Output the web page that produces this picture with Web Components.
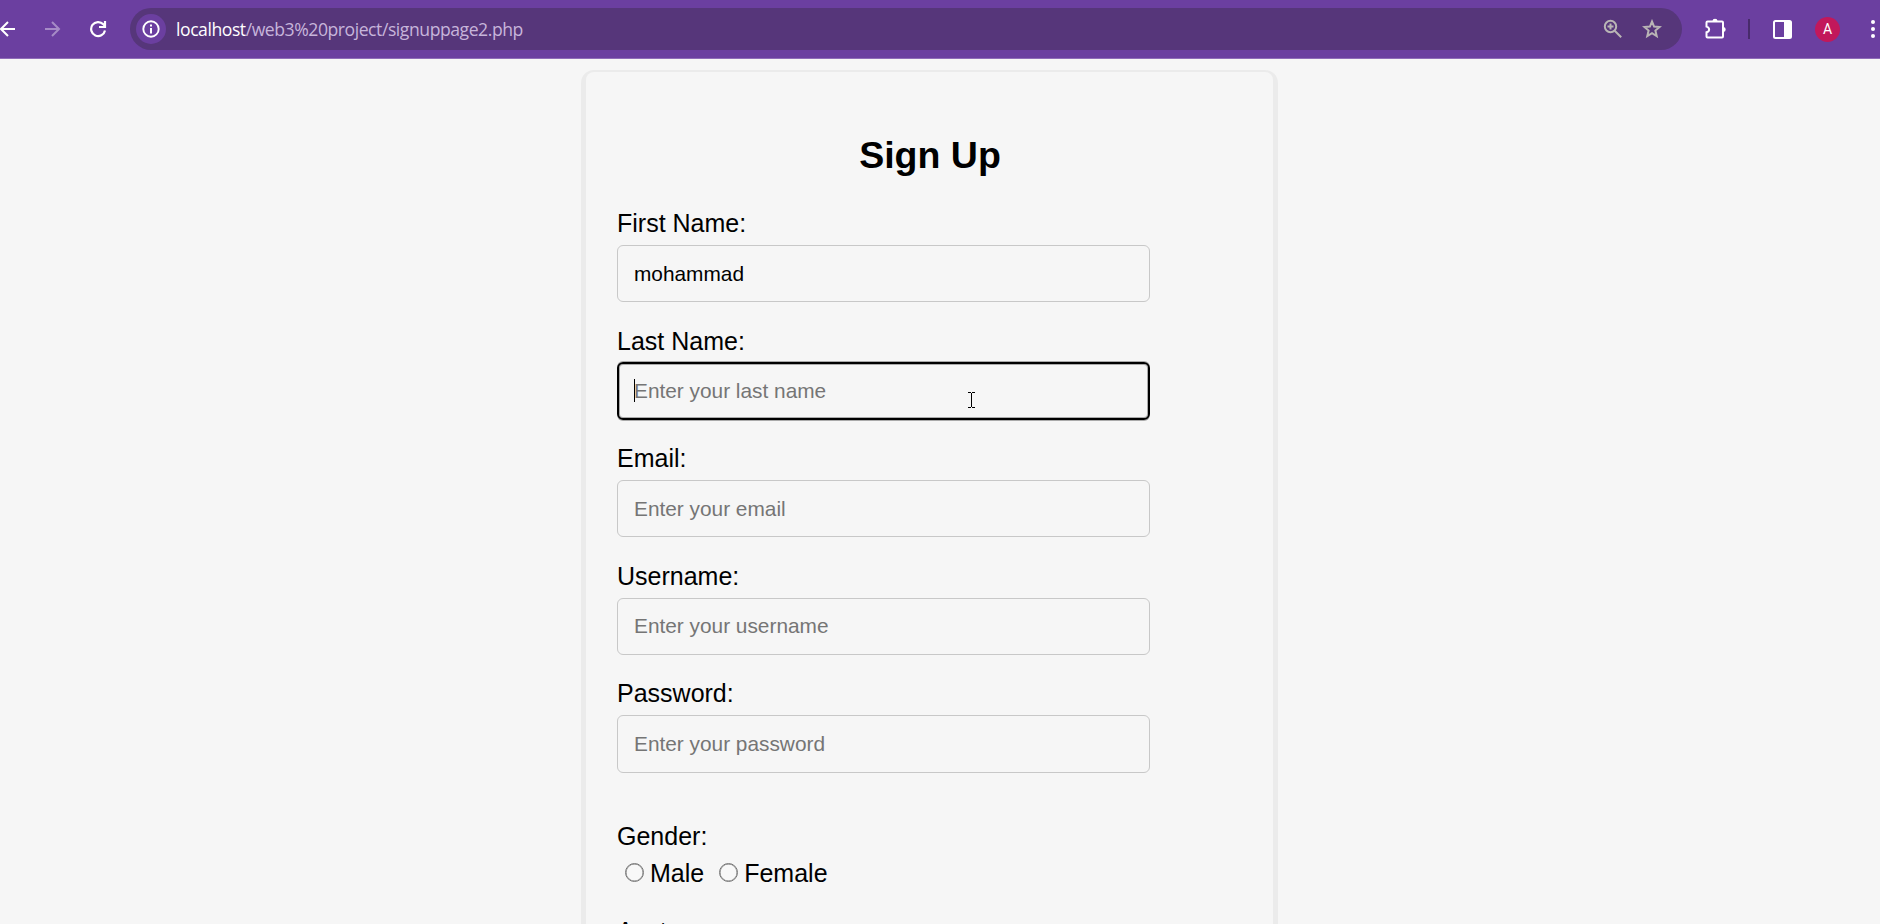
<!DOCTYPE html>
<html lang="en">
<head>
<meta charset="utf-8">
<title>Sign Up</title>
<style>
html,body{margin:0;height:100%;overflow:hidden;background:#f6f6f6;font-family:"Liberation Sans",Arial,sans-serif;color:#000}
</style>
</head>
<body>
<sign-up-app></sign-up-app>
<script>
const define = (name, html) => customElements.define(name, class extends HTMLElement {
  constructor(){ super(); this.attachShadow({mode:'open'}).innerHTML = html; }
});

define('browser-bar', `
<style>
:host{display:flex;align-items:center;box-sizing:border-box;width:1880px;height:59px;background:#6b3fa0;border-bottom:1px solid #8f6cb8;overflow:hidden;flex:none}
svg{display:block;flex:none}
.nav{display:flex;width:130px;height:58px;align-items:center;flex:none}
.back{margin-left:-1px}.fwd{margin-left:28px}.reload{margin-left:26px}
.omni{display:flex;align-items:center;box-sizing:border-box;width:1552px;height:42px;border-radius:21px;background:#56367a;padding:0 20px 0 6px;flex:none}
.info{display:flex;align-items:center;justify-content:center;width:30px;height:30px;border-radius:50%;background:#6b3fa0;flex:none}
.url{flex:1;margin-left:10px;font:17.6px/24px "Open Sans","Noto Sans",sans-serif;letter-spacing:-.45px;color:#c7b5da;white-space:pre}
.url b{font-weight:400;color:#fff}
.star{margin-left:19px}
.puzzle{margin-left:22px}
.sep{width:2px;height:20px;background:#482b6b;margin-left:21px;flex:none}
.side{margin-left:23px}
.avatar{width:25px;height:25px;border-radius:50%;background:#c2185b;color:#fff;font:14px/25px Roboto,sans-serif;text-align:center;margin-left:23px;flex:none}
.dots{margin-left:30px}
</style>
<div class="nav">
<svg class="back" width="18" height="18" viewBox="0 0 18 18" fill="none" stroke="#fff" stroke-width="2"><path d="M16 9H2.5M9 2 2 9l7 7"/></svg>
<svg class="fwd" width="18" height="18" viewBox="0 0 18 18" fill="none" stroke="#a68bc6" stroke-width="2"><path d="M0 9h13.5M7 2l7 7-7 7"/></svg>
<svg class="reload" width="18" height="18" viewBox="0 0 18 18" fill="none" stroke="#fff" stroke-width="2.2"><path d="M16 10.500A7 7 0 1 1 14.300 4.300L16 6M16 1v6h-6"/></svg>
</div>
<div class="omni">
<div class="info"><svg width="18" height="18" viewBox="0 0 18 18"><circle cx="9" cy="9" r="7.7" fill="none" stroke="#fff" stroke-width="1.9"/><path d="M8 4.5h2v2H8zM8 8h2v5.5H8z" fill="#fff"/></svg></div>
<div class="url"><b>localhost</b>/web3%20project/signuppage2.php</div>
<svg width="20" height="20" viewBox="0 0 20 20" fill="none" stroke="#b9b5b5" stroke-width="2"><circle cx="7.5" cy="7.5" r="5.7"/><path d="m11.7 11.7 6.500 6.500M7.500 4.500v6M4.500 7.500h6"/></svg>
<svg class="star" width="20" height="20" viewBox="0 0 20 20" fill="none" stroke="#b9b5b5" stroke-width="2"><path d="m10 2.500 2.100 5.100 5.500.4-4.200 3.600 1.300 5.400-4.700-2.900L5.300 17l1.300-5.400L2.400 8l5.500-.4z"/></svg>
</div>
<svg class="puzzle" width="23" height="22" viewBox="0 0 23 22"><path d="M3.500 3.500H18a1 1 0 0 1 1 1V18.500a1 1 0 0 1-1 1H3.500a1 1 0 0 1-1-1v-4.200c3.500-1 3.500-4.700 0-5.700V4.500a1 1 0 0 1 1-1z" fill="none" stroke="#fff" stroke-width="2"/><path d="M8.500 3a2.500 2.200 0 0 1 5 0zM19.500 9a2.200 2.500 0 0 1 0 5z" fill="#fff"/></svg>
<div class="sep"></div>
<svg class="side" width="19" height="19" viewBox="0 0 19 19"><rect x="1" y="1" width="17" height="17" rx="1.500" fill="none" stroke="#fff" stroke-width="2"/><path d="M11 1h7v17h-7z" fill="#fff"/></svg>
<div class="avatar">A</div>
<svg class="dots" width="6" height="20" viewBox="0 0 6 20" fill="#fff"><circle cx="3" cy="3" r="2"/><circle cx="3" cy="10" r="2"/><circle cx="3" cy="17" r="2"/></svg>`);

customElements.define('form-field', class extends HTMLElement {
  constructor(){ super(); this.attachShadow({mode:'open'}); }
  connectedCallback(){
    const active = this.hasAttribute('active'), value = this.getAttribute('value');
    this.shadowRoot.innerHTML = `
<style>
:host{display:block;height:117.600px}
label{display:block;padding-top:1px;font-size:25px;line-height:28px;height:28px}
.box{position:relative;display:flex;align-items:center;box-sizing:border-box;width:533px;height:57.300px;margin-top:8px;padding-left:16px;border:1px solid #c8c8c8;border-radius:6px;font-size:20.833px;color:${value ? '#000' : '#757575'}}
.box.active{height:58px;padding-left:15px;margin-top:7.500px;border:2px solid #000;box-shadow:0 1px #aaa,0 -1px #aaa,inset 0 0 0 1px #aaa}
.caret{position:absolute;left:15px;top:15px;width:1px;height:23px;background:#000}
.pointer{position:absolute;left:349px;top:28px}
</style>
<label><slot></slot></label>
<div class="box ${active ? 'active' : ''}"><span>${value || this.getAttribute('placeholder')}</span>
${active ? '<i class="caret"></i><svg class="pointer" width="7" height="16" viewBox="0 0 7 16" shape-rendering="crispEdges"><path d="M0 0h3v1H0zM4 0h3v1H4zM3 1h1v14H3zM0 15h3v1H0zM4 15h3v1H4z"/></svg>' : ''}</div>`;
  }
});

define('radio-option', `
<style>
:host{display:flex;align-items:center;font-size:25px;line-height:28px}
i{box-sizing:border-box;width:19px;height:19px;border:1.500px solid #767676;border-radius:50%;background:#f8f8f8;box-shadow:inset 0 0 0 .5px #767676;margin-right:6px;position:relative;top:-1px}
</style><i></i><slot></slot>`);

define('sign-up-card', `
<style>
:host{display:block;box-sizing:border-box;width:687px;height:1100px;margin:13px 0 0 586px;padding:62px 31px 0;border-radius:8px;background:#f6f6f6;box-shadow:0 3px 0 5px #ebebeb}
h2{margin:0 0 32px;padding-left:1px;font-size:37.500px;line-height:42px;text-align:center}
.gender{margin-top:26px;font-size:25px;line-height:28px}
.options{display:flex;gap:15px;padding-left:8px;margin-top:9.500px}
.next{margin-top:30px;font-size:25px;line-height:28px}
</style>
<h2>Sign Up</h2>
<form-field value="mohammad">First Name:</form-field>
<form-field active placeholder="Enter your last name">Last Name:</form-field>
<form-field placeholder="Enter your email">Email:</form-field>
<form-field placeholder="Enter your username">Username:</form-field>
<form-field placeholder="Enter your password">Password:</form-field>
<div class="gender">Gender:</div>
<div class="options"><radio-option>Male</radio-option><radio-option>Female</radio-option></div>
<div class="next">Avatar:</div>`);

define('sign-up-app', `
<style>:host{display:flex;flex-direction:column;width:1880px;height:924px;overflow:hidden;background:#f6f6f6}sign-up-card{flex:none}</style>
<browser-bar></browser-bar><sign-up-card></sign-up-card>`);
</script>
</body>
</html>
